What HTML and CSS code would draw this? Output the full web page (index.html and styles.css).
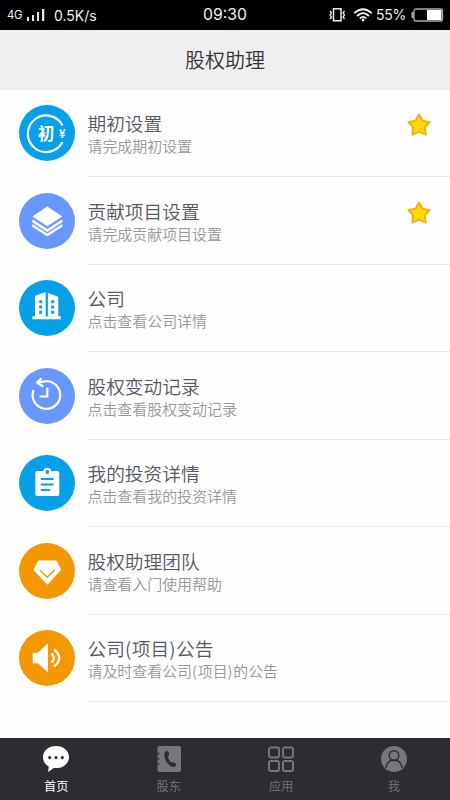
FILE: index.html
```html
<!DOCTYPE html>
<html lang="zh-CN">
<head>
<meta charset="utf-8">
<title>股权助理</title>
<link rel="stylesheet" href="styles.css">
</head>
<body>
<div class="status">
  <span class="net">4G</span>
  <svg class="signal" width="18" height="14" viewBox="0 0 18 14" fill="#e8e8e8"><path d="M0 9h2v4H0zM5 7h2v6H5zM10 4h2v9h-2zM15 1h2.300v12H15z"/></svg>
  <span class="speed">0.5K/s</span>
  <span class="clock">09:30</span>
  <span class="right">
    <svg width="17" height="16" viewBox="0 0 17 16" fill="none" stroke="#eee" stroke-width="1.300"><rect x="4.500" y="1.800" width="7.500" height="12" stroke-width="1.500"/><path d="M1 4l1.500 2L1 8l1.500 2L1 12M15.500 4L14 6l1.500 2L14 10l1.500 2"/></svg>
    <svg class="wifi" width="20" height="14" viewBox="0 0 20 14" fill="none" stroke="#f2f2f2" stroke-width="1.800"><path d="M1.200 5.200Q10-2.800 18.800 5.200M4 8Q10 2.200 16 8M6.800 10.500Q10 7.300 13.200 10.500"/><circle cx="10" cy="12" r="1.400" fill="#f2f2f2" stroke="none"/></svg>
    <span class="percent">55%</span>
    <svg width="33" height="14" viewBox="0 0 33 14"><path d="M2.500 4.500H1v5h1.500" fill="#bbb" stroke="#bbb"/><rect x="3" y="1" width="28.500" height="12" rx="2" fill="#000" stroke="#aaa" stroke-width="1.300"/><path d="M16 2h14.500v10H16z" fill="#fff"/></svg>
  </span>
</div>
<header class="header">股权助理</header>
<main class="list">
  <div class="row">
    <svg class="icon cyan" viewBox="0 0 56 56"><path class="line" d="M43.500 20.500A18.300 18.300 0 1 0 43.500 37" stroke-width="2.200"/><text x="27" y="34.500" font-size="16.500" text-anchor="middle">初</text><text x="43.300" y="32.500" font-size="11" text-anchor="middle">¥</text></svg>
    <div class="body"><div><h2>期初设置</h2><p>请完成期初设置</p></div>
      <svg class="star" viewBox="0 0 26 26"><path d="M13 2.500l3.500 6.200 7 1.400-4.700 5.400.9 7.100-6.700-2.900-6.700 2.900.9-7.100-4.700-5.400 7-1.400z"/></svg></div>
  </div>
  <div class="row">
    <svg class="icon blue" viewBox="0 0 56 56"><path d="M28.300 13.500l15 10-15 9.700-15-9.700z"/><path d="M13.300 26.300l15 9.700 15-9.700v3l-15 9.700-15-9.700zM13.300 30.900l15 9.700 15-9.700v2.800l-15 9.700-15-9.700z"/></svg>
    <div class="body"><div><h2>贡献项目设置</h2><p>请完成贡献项目设置</p></div>
      <svg class="star" viewBox="0 0 26 26"><path d="M13 2.500l3.500 6.200 7 1.400-4.700 5.400.9 7.100-6.700-2.900-6.700 2.900.9-7.100-4.700-5.400 7-1.400z"/></svg></div>
  </div>
  <div class="row">
    <svg class="icon cyan" viewBox="0 0 56 56"><path d="M16 16.500q0-.7.700-1L26.700 12v24.500h2.200V13l9.700 3.600q.7.300.7 1v18.700h2.400v3H13.300v-3H16z"/><path class="cut" d="M20.200 20.200h3v3h-3zm0 5.300h3v3h-3zm0 5.300h3v3h-3zM32.200 20.200h3v3h-3zm0 5.300h3v3h-3zm0 5.300h3v3h-3z"/></svg>
    <div class="body"><div><h2>公司</h2><p>点击查看公司详情</p></div></div>
  </div>
  <div class="row">
    <svg class="icon blue" viewBox="0 0 56 56"><path class="line" stroke-width="2.200" stroke-linecap="round" stroke-linejoin="round" d="M14.300 22.800A13.800 13.800 0 1 0 24 13.700L18.500 14.500M22 10.700L18.200 14.500 23.500 18"/><path class="line" stroke-width="2.200" d="M28.300 19.500v9H20.500"/></svg>
    <div class="body"><div><h2>股权变动记录</h2><p>点击查看股权变动记录</p></div></div>
  </div>
  <div class="row">
    <svg class="icon cyan" viewBox="0 0 56 56"><rect x="16.300" y="16" width="24" height="25" rx="2"/><circle cx="28.300" cy="16.800" r="4"/><circle class="cut" cx="28.300" cy="17" r="1.900"/><path class="cut" d="M21.800 23h12.800v1.900H21.800zm0 5.500h12.800v1.900H21.800zm0 5.500h9.400v1.900h-9.400z"/></svg>
    <div class="body"><div><h2>我的投资详情</h2><p>点击查看我的投资详情</p></div></div>
  </div>
  <div class="row">
    <svg class="icon orange" viewBox="0 0 56 56"><path d="M19.300 17.500h18.200l4.800 9.300-14 15-14-15z"/><path d="M20.800 27l7.500 7.300 7.500-7.300" fill="none" stroke="#f39800" stroke-width="1.500"/></svg>
    <div class="body"><div><h2>股权助理团队</h2><p>请查看入门使用帮助</p></div></div>
  </div>
  <div class="row">
    <svg class="icon orange" viewBox="0 0 56 56"><path d="M13.700 22.700h5.200l10-9.400v29l-10-9h-5.200z"/><path class="line" stroke-width="2.300" d="M32.500 23.500q4.800 4.500 0 9.200M35 19.500q10.500 8.500 0 17"/></svg>
    <div class="body"><div><h2>公司<i>(</i>项目<i>)</i>公告</h2><p>请及时查看公司<i>(</i>项目<i>)</i>的公告</p></div></div>
  </div>
</main>
<nav class="tabs">
  <div class="tab active"><svg viewBox="0 0 26 26"><path fill="#fff" d="M13 0C5.600 0 0 4.800 0 11c0 4.300 2.200 7.400 5.700 9.400L5.200 26l5.500-4c9 .9 15.300-4.200 15.300-11C26 4.800 20.400 0 13 0z"/><g fill="#2d2c31"><circle cx="6.700" cy="11.600" r="1.600"/><circle cx="13" cy="11.600" r="1.600"/><circle cx="19.300" cy="11.600" r="1.600"/></g></svg><span>首页</span></div>
  <div class="tab"><svg viewBox="0 0 26 26"><rect x="1.500" width="23.500" height="26" rx="2" fill="#77767b"/><path stroke="#2d2c31" stroke-width="1.300" d="M0 7.500h3.500M0 12.800h3.500M0 18.200h3.500"/><path fill="#2d2c31" d="M9.800 5.300c1.600-1 3 .3 3.300 2.100.2 1.500-.5 2.300-1.400 2.800.5 2.600 1.700 4.700 3.700 6.400.9-.7 2-.9 3.300.1 1.500 1.100 2 2.500.8 3.400-2.800 2.200-7-.2-9.300-4.700-2.300-4.300-2.700-8.700-.4-10.100z"/></svg><span>股东</span></div>
  <div class="tab"><svg viewBox="0 0 26 26" fill="none" stroke="#77767b" stroke-width="1.900"><rect x="1" y="1.500" width="10" height="10" rx="2"/><rect x="15" y="1.500" width="10" height="10" rx="2"/><rect x="1" y="15" width="10" height="10" rx="2"/><rect x="15" y="15" width="10" height="10" rx="2"/></svg><span>应用</span></div>
  <div class="tab"><svg viewBox="0 0 26 26"><circle cx="13" cy="13" r="13" fill="#77767b"/><g fill="none" stroke="#2d2c31" stroke-width="1.400"><circle cx="13" cy="9.500" r="4.800"/><path d="M5 22q1-7.700 8-7.700T21 22"/></g></svg><span>我</span></div>
</nav>
</body>
</html>
```
FILE: styles.css
```css
* { box-sizing: border-box; margin: 0; padding: 0; }
body {
  width: 450px;
  height: 800px;
  display: flex;
  flex-direction: column;
  overflow: hidden;
  background: #fefefe;
  font-family: "Noto Sans CJK SC", sans-serif;
}
svg { display: block; flex: none; }
.status {
  position: relative;
  flex: none;
  height: 30px;
  padding: 0 7px;
  display: flex;
  align-items: center;
  background: #000;
  color: #f0f0f0;
  font-family: Inter, sans-serif;
}
.net { width: 20px; font-size: 11.3px; letter-spacing: -0.2px; }
.speed { margin-left: 9px; font-size: 14px; line-height: 31px; }
.clock { position: absolute; left: 0; right: 0; text-align: center; font-size: 15.8px; line-height: 32px; }
.right { margin-left: auto; margin-right: -1px; display: flex; align-items: center; }
.wifi { margin-left: 7px; }
.percent { width: 31px; margin: 0 4px 0 3px; font-size: 14px; letter-spacing: -0.2px; line-height: 32px; }
.header {
  flex: none;
  height: 59.5px;
  background: #efeff0;
  border-bottom: 1px solid #eaeaeb;
  color: #333;
  font-size: 20px;
  font-weight: 350;
  line-height: 59px;
  text-align: center;
}
.list { flex: 1; }
.row { height: 87.5px; display: flex; padding-left: 18.5px; }
.icon { width: 56px; height: 56px; margin-top: 15.5px; border-radius: 50%; fill: #fff; }
.icon text { font-weight: 700; }
.cyan { background: #05a0e8; }
.cyan .cut { fill: #05a0e8; }
.blue { background: #6898fd; }
.orange { background: #f39800; }
.line { fill: none; stroke: #fff; }
.body {
  flex: 1;
  margin-left: 12.5px;
  padding: 20.5px 18px 0 0.5px;
  display: flex;
  justify-content: space-between;
  border-bottom: 1px solid #e9e9ea;
}
h2 { color: #555a62; font-size: 18.7px; font-weight: 350; line-height: 25px; }
p { margin-top: 1px; color: #979797; font-size: 14.95px; font-weight: 350; line-height: 20px; }
i { font-style: normal; letter-spacing: 0.7px; }
.star { width: 26px; height: 26px; margin-top: 2px; fill: #ffda0b; stroke: #f5b20b; stroke-width: 2; stroke-linejoin: round; }
.tabs {
  flex: none;
  height: 62.5px;
  display: flex;
  background: #2d2c31;
}
.tab {
  flex: 1;
  padding-top: 8.5px;
  display: flex;
  flex-direction: column;
  align-items: center;
  color: #77767b;
  font-size: 12.2px;
  font-weight: 350;
  line-height: 18px;
}
.tab svg { width: 26px; height: 26px; margin-bottom: 4.5px; }
.active { color: #fff; font-weight: 400; }
```
